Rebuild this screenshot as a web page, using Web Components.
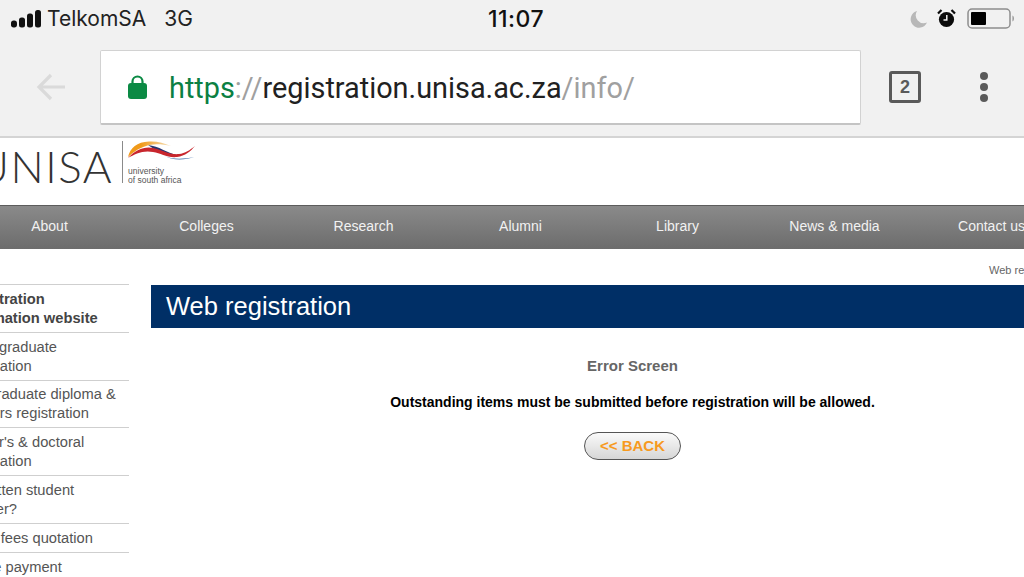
<!DOCTYPE html>
<html lang="en">
<head>
<meta charset="utf-8">
<title>Web registration</title>
<style>
  html, body { margin: 0; height: 577px; overflow: hidden; background: #fff; }
  body { font-family: "Liberation Sans", Arial, sans-serif; }
  .page-row { display: flex; width: 1024px; overflow: hidden; }
</style>
</head>
<body>
<status-bar></status-bar>
<browser-bar></browser-bar>
<site-header></site-header>
<site-nav></site-nav>
<div class="page-row">
  <side-menu></side-menu>
  <web-main></web-main>
</div>

<script>
class StatusBar extends HTMLElement {
  constructor() {
    super();
    this.attachShadow({ mode: "open" });
    this.shadowRoot.innerHTML = `
      <style>
        :host {
          display: grid;
          grid-template-columns: 1fr auto 1fr;
          align-items: center;
          height: 37px;
          padding: 0 8px 0 11px;
          background: #f1f1f1;
          color: #222;
          font-family: Inter, "Liberation Sans", sans-serif;
          font-size: 21px;
        }
        .left { display: flex; align-items: center; }
        .carrier { margin-left: 6px; }
        .net { margin-left: 18px; }
        .time { margin-left: 5px; font-weight: 500; color: #111; font-size: 23px; letter-spacing: .5px; }
        .right { display: flex; justify-content: flex-end; align-items: center; gap: 9px; }
        .alarm { margin-right: 2px; }
        svg { display: block; }
      </style>
      <div class="left">
        <svg width="30" height="18" viewBox="0 0 30 18">
          <rect x="0" y="10.500" width="6" height="7" rx="2.700" fill="#111"/>
          <rect x="8" y="7.500" width="6" height="10" rx="2.500" fill="#111"/>
          <rect x="16" y="3.500" width="6" height="14" rx="2.500" fill="#111"/>
          <rect x="24" y="0" width="6" height="17.500" rx="2.500" fill="#111"/>
        </svg>
        <span class="carrier">TelkomSA</span>
        <span class="net">3G</span>
      </div>
      <div class="time">11:07</div>
      <div class="right">
        <svg width="18" height="18" viewBox="0 0 18 18">
          <path d="M7 1a8.500 8.500 0 1 0 10 11.500A8 8 0 0 1 7 1z" fill="#b8b8b8"/>
        </svg>
        <svg class="alarm" width="19" height="19" viewBox="0 0 19 19">
          <circle cx="9.500" cy="10.500" r="7.600" fill="#0a0a0a"/>
          <path d="M9.800 6v5H6.500" fill="none" stroke="#f1f1f1" stroke-width="1.500"/>
          <path d="M1 4.500 4.500 1M18 4.500 14.500 1" stroke="#0a0a0a" stroke-width="2.200"/>
        </svg>
        <svg width="49" height="21" viewBox="0 0 49 21">
          <rect x="1" y="1" width="42" height="19" rx="4" fill="none" stroke="#8d8d8d" stroke-width="1.500"/>
          <rect x="4" y="4" width="15" height="13" rx="1" fill="#000"/>
          <path d="M45.500 7.500c1.800.5 1.800 5.500 0 6z" fill="#8d8d8d"/>
        </svg>
      </div>
    `;
  }
}

class BrowserBar extends HTMLElement {
  constructor() {
    super();
    this.attachShadow({ mode: "open" });
    this.shadowRoot.innerHTML = `
      <style>
        :host {
          display: flex;
          align-items: flex-start;
          height: 101px;
          box-sizing: border-box;
          padding-top: 13px;
          background: #f1f1f1;
          border-bottom: 2px solid #d4d4d4;
        }
        .back { width: 100px; height: 74px; padding-left: 2px; box-sizing: border-box; display: flex; align-items: center; justify-content: center; }
        .omnibox {
          box-sizing: border-box;
          width: 761px;
          height: 75px;
          display: flex;
          align-items: center;
          padding-left: 27px;
          background: #fff;
          border: 1px solid #d2d2d2;
          border-bottom: 2px solid #c4c4c4;
          border-radius: 2px;
        }
        .url {
          margin-left: 22px;
          padding-top: 2px;
          font-family: Roboto, "Liberation Sans", sans-serif;
          font-size: 28.850px;
          color: #212121;
          white-space: nowrap;
        }
        .scheme { color: #0b8043; }
        .muted { color: #a0a0a0; }
        .tabs {
          box-sizing: border-box;
          width: 32px;
          height: 32px;
          margin: 21px 0 0 28px;
          display: flex;
          align-items: center;
          justify-content: center;
          border: 3.500px solid #5a5a5a;
          border-radius: 3px;
          color: #5a5a5a;
          font-weight: 700;
          font-size: 18px;
        }
        .menu { display: flex; flex-direction: column; gap: 3px; margin: 22px 0 0 59px; }
        .menu i { width: 8px; height: 8px; border-radius: 50%; background: #5a5a5a; }
      </style>
      <div class="back">
        <svg width="30" height="28" viewBox="0 0 30 28">
          <path d="M29 14H3M15 2 3 14l12 12" fill="none" stroke="#dadada" stroke-width="3.200"/>
        </svg>
      </div>
      <div class="omnibox">
        <svg width="19" height="24" viewBox="0 0 19 24">
          <path d="M4.500 9V6.500a5 5 0 0 1 10 0V9" fill="none" stroke="#0b8a44" stroke-width="2.200"/>
          <rect x="0" y="8" width="19" height="16" rx="3" fill="#0b8a44"/>
        </svg>
        <div class="url"><span class="scheme">https</span><span class="muted">://</span>registration.unisa.ac.za<span class="muted">/info/</span></div>
      </div>
      <div class="tabs">2</div>
      <div class="menu"><i></i><i></i><i></i></div>
    `;
  }
}

class SiteHeader extends HTMLElement {
  constructor() {
    super();
    this.attachShadow({ mode: "open" });
    this.shadowRoot.innerHTML = `
      <style>
        :host {
          display: flex;
          align-items: flex-start;
          height: 67px;
          overflow: hidden;
          background: #fff;
        }
        .wordmark {
          flex: none;
          margin: 1px 0 0 -23px;
          font-family: Lato, "Open Sans", sans-serif;
          font-weight: 300;
          font-size: 44px;
          line-height: 54px;
          letter-spacing: 1.500px;
          color: #333;
        }
        .rule { flex: none; width: 1px; height: 42px; margin: 3px 0 0 9px; background: #8a8a8a; }
        .crest { margin: 2px 0 0 4px; width: 70px; }
        .crest svg { display: block; }
        .crest p {
          margin: 7px 0 0 1px;
          font-size: 8.500px;
          line-height: 9px;
          color: #555;
          white-space: nowrap;
        }
      </style>
      <div class="wordmark">UNISA</div>
      <div class="rule"></div>
      <div class="crest">
        <svg width="68" height="20" viewBox="0 0 68 20">
          <defs>
            <linearGradient id="sun" x1="0" x2="1" y1="0" y2="0">
              <stop offset="0.300" stop-color="#f09a1a"/>
              <stop offset="1" stop-color="#f6e2bd"/>
            </linearGradient>
          </defs>
          <path d="M1 17C3 8 10 2 22 1.500 30 1 37 3 44 6 36 4 28 3.500 22 5 14 7 7 11 1 17z" fill="url(#sun)"/>
          <path d="M21 5C32 6 40 13 50 15c-5 3-14 0-20-4z" fill="#27356f"/>
          <path d="M38 16c8 4 20 3 29 1-8 3-21 4-29-1z" fill="#3b6aa8"/>
          <path d="M1 18C8 10 18 6 26 8c10 2 16 7 26 6 6-.500 11-4 16-8-4 5-10 10-18 11-10 1-16-4-24-5C16 10 8 14 1 18z" fill="#c8262d"/>
        </svg>
        <p>university<br>of south africa</p>
      </div>
    `;
  }
}

class SiteNav extends HTMLElement {
  constructor() {
    super();
    this.attachShadow({ mode: "open" });
    const items = ["About", "Colleges", "Research", "Alumni", "Library", "News &amp; media", "Contact us"];
    this.shadowRoot.innerHTML = `
      <style>
        :host {
          display: block;
          height: 44px;
          overflow: hidden;
          box-sizing: border-box;
          border-top: 1px solid #5c5c5c;
          background: linear-gradient(#8a8a8a, #6c6c6c);
        }
        ul {
          display: grid;
          grid-template-columns: repeat(7, 157px);
          width: 1099px;
          margin: 0 0 0 -29px;
          padding: 0;
          list-style: none;
        }
        li {
          line-height: 40px;
          text-align: center;
          font-size: 14px;
          color: #f2f2f2;
          white-space: nowrap;
        }
      </style>
      <ul>${items.map((t) => `<li>${t}</li>`).join("")}</ul>
    `;
  }
}

class SideMenu extends HTMLElement {
  constructor() {
    super();
    this.attachShadow({ mode: "open" });
    const rows = [
      ["Registration<br>information website", true],
      ["Undergraduate<br>registration"],
      ["Postgraduate diploma &amp;<br>honours registration"],
      ["Master's &amp; doctoral<br>registration"],
      ["Forgotten student<br>number?"],
      ["Study fees quotation"],
      ["Online payment"],
    ];
    this.shadowRoot.innerHTML = `
      <style>
        :host {
          display: block;
          flex: none;
          width: 129px;
          overflow: hidden;
          margin-top: 35px;
          height: 293px;
        }
        ul {
          width: 180px;
          margin: 0 0 0 -51px;
          padding: 0;
          list-style: none;
          border-top: 1px solid #cfcfcf;
        }
        li {
          padding: 4.800px 0 4px 10px;
          border-bottom: 1px solid #cfcfcf;
          font-size: 14.700px;
          line-height: 19px;
          color: #555;
          white-space: nowrap;
        }
        li.on { font-weight: 700; color: #444; }
      </style>
      <ul>${rows.map(([t, on]) => `<li class="${on ? "on" : ""}">${t}</li>`).join("")}</ul>
    `;
  }
}

class WebMain extends HTMLElement {
  constructor() {
    super();
    this.attachShadow({ mode: "open" });
    this.shadowRoot.innerHTML = `
      <style>
        :host {
          display: block;
          flex: none;
          width: 963px;
          margin-left: 22px;
        }
        .crumb {
          height: 36px;
          box-sizing: border-box;
          padding: 15px 0 0 838px;
          font-size: 11px;
          line-height: 13px;
          color: #666;
          white-space: nowrap;
        }
        h1 {
          margin: 0;
          height: 43px;
          padding-left: 15px;
          background: #002f66;
          color: #fff;
          font-weight: 400;
          font-size: 25.500px;
          line-height: 43px;
        }
        .body { display: flex; flex-direction: column; align-items: center; }
        h2 { margin: 29px 0 0; font-size: 15px; line-height: 18px; color: #666; }
        p { margin: 19px 0 0; font-size: 14px; font-weight: 700; line-height: 16px; color: #000; }
        button {
          box-sizing: border-box;
          width: 97px;
          height: 28px;
          margin-top: 22px;
          padding: 0 0 2px;
          border: 1.500px solid #555;
          border-radius: 14px;
          background: linear-gradient(#fafafa, #d6d6d6);
          color: #f79a1e;
          font-family: inherit;
          font-size: 15px;
          font-weight: 700;
        }
      </style>
      <div class="crumb">Web registration</div>
      <h1>Web registration</h1>
      <div class="body">
        <h2>Error Screen</h2>
        <p>Outstanding items must be submitted before registration will be allowed.</p>
        <button type="button">&lt;&lt; BACK</button>
      </div>
    `;
  }
}

customElements.define("status-bar", StatusBar);
customElements.define("browser-bar", BrowserBar);
customElements.define("site-header", SiteHeader);
customElements.define("site-nav", SiteNav);
customElements.define("side-menu", SideMenu);
customElements.define("web-main", WebMain);
</script>
</body>
</html>
